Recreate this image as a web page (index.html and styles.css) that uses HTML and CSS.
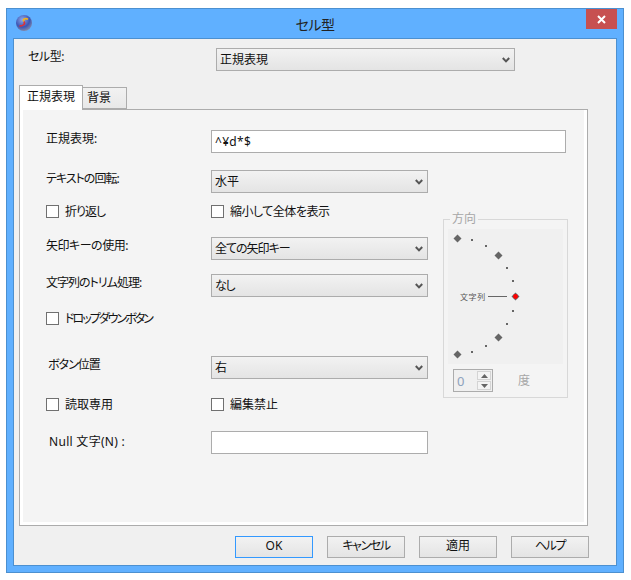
FILE: index.html
```html
<!DOCTYPE html>
<html lang="ja">
<head>
    <meta charset="UTF-8">
    <title>セル型</title>
    <link rel="stylesheet" href="styles.css">
</head>
<body>

    <div class="window">
        <!-- Title bar -->
        <div class="titlebar">
            <svg class="app-icon" width="16" height="16" viewBox="0 0 16 16">
                <defs>
                    <radialGradient id="ball" cx="0.4" cy="0.3" r="0.75">
                        <stop offset="0" stop-color="#8fa8e8"/>
                        <stop offset="0.6" stop-color="#3c55b4"/>
                        <stop offset="1" stop-color="#8a8fa8"/>
                    </radialGradient>
                </defs>
                <circle cx="8" cy="8" r="8" fill="url(#ball)"/>
                <path d="M12 4.2C9 2.8 6.5 4.5 8 6.5" fill="none" stroke="#f2b21e" stroke-width="1.8"/>
                <path d="M8 6.5C9.5 8.5 8 11 3.5 11" fill="none" stroke="#d8323c" stroke-width="1.8"/>
            </svg>
            <div class="title">セル型</div>
            <div class="close">
                <svg width="9" height="9" viewBox="0 0 9 9">
                    <path d="M1 1L8 8M8 1L1 8" stroke="#fff" stroke-width="2"/>
                </svg>
            </div>
        </div>

        <div class="client">
            <div class="top-row">
                <div class="top-label tight-05">セル型:</div>
                <div class="combo combo-type">
                    <span>正規表現</span>
                    <svg class="chevron" width="8" height="6" viewBox="0 0 8 6"><path d="M0.8 1L4 4.4L7.2 1" fill="none" stroke="#555" stroke-width="2"/></svg>
                </div>
            </div>

            <div class="tabs">
                <div class="tab tab-active">正規表現</div>
                <div class="tab">背景</div>
            </div>

            <div class="panel">
                <div class="row">
                    <div class="label">正規表現:</div>
                    <input class="textbox textbox-wide" type="text" value="^¥d*$">
                </div>

                <div class="panel-body">
                    <div class="form">
                        <div class="row gap-17">
                            <div class="label tight-1">テキストの回転:</div>
                            <div class="combo">
                                <span>水平</span>
                                <svg class="chevron" width="8" height="6" viewBox="0 0 8 6"><path d="M0.8 1L4 4.4L7.2 1" fill="none" stroke="#555" stroke-width="2"/></svg>
                            </div>
                        </div>
                        <div class="row gap-12">
                            <label class="check tight-1"><input type="checkbox">折り返し</label>
                            <label class="check tight-05"><input type="checkbox">縮小して全体を表示</label>
                        </div>
                        <div class="row gap-19">
                            <div class="label tight-05">矢印キーの使用:</div>
                            <div class="combo">
                                <span class="tight-1">全ての矢印キー</span>
                                <svg class="chevron" width="8" height="6" viewBox="0 0 8 6"><path d="M0.8 1L4 4.4L7.2 1" fill="none" stroke="#555" stroke-width="2"/></svg>
                            </div>
                        </div>
                        <div class="row gap-14">
                            <div class="label tight-1">文字列のトリム処理:</div>
                            <div class="combo">
                                <span class="tight-15">なし</span>
                                <svg class="chevron" width="8" height="6" viewBox="0 0 8 6"><path d="M0.8 1L4 4.4L7.2 1" fill="none" stroke="#555" stroke-width="2"/></svg>
                            </div>
                        </div>
                        <div class="row gap-15">
                            <label class="check tight-2"><input type="checkbox">ドロップダウンボタン</label>
                        </div>
                        <div class="row gap-31">
                            <div class="label label-indent tight-1">ボタン位置</div>
                            <div class="combo">
                                <span>右</span>
                                <svg class="chevron" width="8" height="6" viewBox="0 0 8 6"><path d="M0.8 1L4 4.4L7.2 1" fill="none" stroke="#555" stroke-width="2"/></svg>
                            </div>
                        </div>
                        <div class="row gap-19">
                            <label class="check"><input type="checkbox">読取専用</label>
                            <label class="check"><input type="checkbox">編集禁止</label>
                        </div>
                        <div class="row gap-20">
                            <div class="label label-indent label-null">Null 文字(N) :</div>
                            <input class="textbox" type="text">
                        </div>
                    </div>

                    <!-- Text direction, disabled -->
                    <fieldset class="direction">
                        <legend>方向</legend>
                        <svg class="dial" width="115" height="135" viewBox="0 0 115 135">
                            <g fill="#666">
                                <path d="M9.5 5.5l4 4-4 4-4-4z"/>
                                <path d="M50.5 22.5l4 4-4 4-4-4z"/>
                                <path d="M50.5 104.5l4 4-4 4-4-4z"/>
                                <path d="M9.5 121.5l4 4-4 4-4-4z"/>
                                <path d="M67.5 63.5l4 4-4 4-4-4z"/>
                                <rect x="23" y="10" width="2" height="2"/>
                                <rect x="37" y="16" width="2" height="2"/>
                                <rect x="58" y="38" width="2" height="2"/>
                                <rect x="64" y="51" width="2" height="2"/>
                                <rect x="64" y="81" width="2" height="2"/>
                                <rect x="58" y="94" width="2" height="2"/>
                                <rect x="37" y="116" width="2" height="2"/>
                                <rect x="23" y="122" width="2" height="2"/>
                                <rect x="40" y="67" width="19" height="1"/>
                            </g>
                            <circle cx="67.5" cy="67.5" r="2.4" fill="#ff0000"/>
                            <text class="dial-text" x="12" y="71">文字列</text>
                        </svg>
                        <div class="degree-row">
                            <div class="spinner">
                                <span class="spin-value">0</span>
                                <div class="spin-buttons">
                                    <div class="spin-btn"><svg width="7" height="4" viewBox="0 0 7 4"><path d="M3.5 0L7 4H0z" fill="#666"/></svg></div>
                                    <div class="spin-btn"><svg width="7" height="4" viewBox="0 0 7 4"><path d="M0 0H7L3.5 4z" fill="#666"/></svg></div>
                                </div>
                            </div>
                            <span class="degree-unit">度</span>
                        </div>
                    </fieldset>
                </div>
            </div>

            <div class="footer">
                <div class="btn btn-default">OK</div>
                <div class="btn tight-15">キャンセル</div>
                <div class="btn">適用</div>
                <div class="btn tight-15">ヘルプ</div>
            </div>
        </div>
    </div>

</body>
</html>
```

FILE: styles.css
```css
/* General Styles */
body {
    margin: 0;
    background-color: #fff;
    color: #111;
    font-family: "Noto Sans", "Noto Sans CJK JP", sans-serif;
    font-size: 12px;
    line-height: 16px;
    font-feature-settings: "palt";
}

.window {
    box-sizing: border-box;
    width: 618px;
    height: 565px;
    margin: 8px 0 0 6px;
    padding: 0 6px 6px;
    background-color: #60b0ff;
    border: 1px solid #4c90d0;
}

/* Kana in the original font is narrower */
.tight-05 { letter-spacing: -0.5px; }
.tight-1 { letter-spacing: -1px; }
.tight-15 { letter-spacing: -1.4px; }
.tight-2 { letter-spacing: -2px; }

/* Title bar */
.titlebar {
    display: grid;
    grid-template-columns: 1fr auto 1fr;
    align-items: start;
    height: 29px;
}

.app-icon {
    margin: 6px 0 0 3px;
}

.title {
    margin-top: 6px;
    font-size: 14px;
    line-height: 20px;
    letter-spacing: -0.5px;
    color: #222;
}

.close {
    display: flex;
    align-items: center;
    justify-content: center;
    justify-self: end;
    width: 31px;
    height: 20px;
    background-color: #c75050;
}

.client {
    box-sizing: border-box;
    height: 528px;
    padding: 9px 27px 0 5px;
    background-color: #f0f0f0;
    border: 1px solid #4c90d0;
}

/* Controls */
.top-row {
    display: flex;
    align-items: center;
    padding-left: 9px;
}

.top-label {
    width: 188px;
    padding-bottom: 6px;
}

.combo {
    box-sizing: border-box;
    display: flex;
    align-items: center;
    justify-content: space-between;
    width: 217px;
    height: 23px;
    padding: 0 4px 0 3px;
    background: linear-gradient(#f2f2f2, #e4e4e4);
    border: 1px solid #acacac;
}

.combo-type {
    width: 299px;
}

.chevron {
    margin-top: 1px;
}

.textbox {
    box-sizing: border-box;
    width: 217px;
    height: 23px;
    padding: 0 3px;
    background-color: #fff;
    border: 1px solid #acacac;
    font: inherit;
    letter-spacing: 0.3px;
    color: inherit;
    outline: none;
}

.textbox-wide {
    width: 355px;
}

/* Tabs */
.tabs {
    display: flex;
    align-items: flex-end;
    height: 24px;
    margin-top: 14px;
}

.tab {
    box-sizing: border-box;
    width: 44px;
    height: 22px;
    padding-left: 4px;
    line-height: 20px;
    background: linear-gradient(#f2f2f2, #e8e8e8);
    border: 1px solid #acacac;
    border-left: none;
}

.tab-active {
    position: relative;
    z-index: 1;
    width: 64px;
    height: 25px;
    margin-bottom: -1px;
    padding-left: 7px;
    line-height: 21px;
    background: #fff;
    border-left: 1px solid #acacac;
    border-bottom: none;
}

.panel {
    box-sizing: border-box;
    width: 569px;
    height: 417px;
    padding: 20px 0 0 26px;
    background-color: #f4f4f4;
    border: 1px solid #acacac;
    box-shadow: inset 3px 0 #fff, inset -3px 0 #fff, inset 0 -3px #fff;
}

.panel-body {
    display: flex;
}

.form {
    width: 382px;
}

.row {
    display: flex;
    align-items: center;
}

.gap-12 { margin-top: 12px; }
.gap-14 { margin-top: 14px; }
.gap-15 { margin-top: 15px; }
.gap-17 { margin-top: 17px; }
.gap-19 { margin-top: 19px; }
.gap-20 { margin-top: 20px; }
.gap-31 { margin-top: 31px; }

.label {
    box-sizing: border-box;
    width: 165px;
    padding-bottom: 5px;
    white-space: nowrap;
}

.label-indent {
    padding-left: 2px;
}

.label-null {
    padding-left: 3px;
    padding-bottom: 1px;
    letter-spacing: 0.3px;
}

.check {
    display: flex;
    align-items: center;
    width: 165px;
    height: 13px;
    white-space: nowrap;
}

.check input {
    box-sizing: border-box;
    appearance: none;
    width: 13px;
    height: 13px;
    margin: 0 6px 0 0;
    background-color: #fff;
    border: 1px solid #707070;
}

/* Direction box */
.direction {
    box-sizing: border-box;
    width: 125px;
    height: 187px;
    margin: 58px 0 0 15px;
    padding: 2px 4px 5px;
    background: none;
    border: 1px solid #d8d8d8;
    color: #a6a6a6;
}

.direction legend {
    margin-left: 2px;
    padding: 0 2px;
    line-height: 16px;
}

.dial {
    display: block;
    background-color: #f0f0f0;
}

.dial-text {
    font-size: 8px;
    fill: #555;
    letter-spacing: 0.6px;
}

.degree-row {
    display: flex;
    align-items: center;
    margin: 5px 0 0 5px;
}

.spinner {
    box-sizing: border-box;
    display: flex;
    align-items: center;
    justify-content: space-between;
    width: 40px;
    height: 23px;
    padding: 0 1px 0 3px;
    background-color: #f0f0f0;
    border: 1px solid #acacac;
}

.spin-value {
    color: #8ea2bc;
    font-size: 13px;
}

.spin-buttons {
    display: flex;
    flex-direction: column;
    gap: 1px;
}

.spin-btn {
    box-sizing: border-box;
    display: flex;
    align-items: center;
    justify-content: center;
    width: 14px;
    height: 9px;
    background-color: #f4f4f4;
    border: 1px solid #d4d4d4;
}

.degree-unit {
    margin-left: 25px;
}

/* Footer buttons */
.footer {
    display: flex;
    justify-content: flex-end;
    gap: 14px;
    margin-top: 10px;
}

.btn {
    box-sizing: border-box;
    width: 78px;
    height: 22px;
    line-height: 18px;
    text-align: center;
    background: linear-gradient(#f2f2f2, #e4e4e4);
    border: 1px solid #acacac;
}

.btn-default {
    border-color: #3399ff;
}
```
